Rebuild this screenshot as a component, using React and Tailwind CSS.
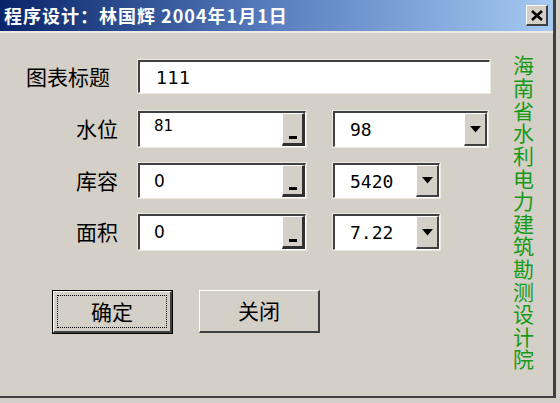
import React from 'react';

const cjk = { fontFamily: '"Noto Sans CJK SC", "DejaVu Sans", sans-serif' };
const num = { fontFamily: '"DejaVu Sans", "Liberation Sans", sans-serif' };
const mono = { fontFamily: '"DejaVu Sans Mono", "Liberation Mono", monospace' };

const sunken =
  'border-t-2 border-l-2 border-b border-r border-t-[#404040] border-l-[#404040] border-b-white border-r-white bg-white shadow-[0_0_0_1px_#ece9e2]';

function DotButton() {
  return (
    <div className="flex h-full w-[23px] items-end justify-center border-t border-l border-t-white border-l-white border-b-[3px] border-r-[3px] border-b-[#303030] border-r-[#303030] bg-[#d4d0c8] pb-[4px]">
      <div className="h-[3px] w-[8px] bg-black" />
    </div>
  );
}

function ArrowButton() {
  return (
    <div className="flex h-full w-[23px] items-center justify-center border-t border-l border-t-white border-l-white border-b-2 border-r-2 border-b-[#404040] border-r-[#404040] bg-[#d4d0c8]">
      <svg width="11" height="7" viewBox="0 0 11 7">
        <path d="M0 0H11L5.5 6.5Z" fill="#000" />
      </svg>
    </div>
  );
}

function Row({ label, value, combo, comboW, h, small }) {
  return (
    <div className="flex items-center" style={{ height: h }}>
      <div className="w-[120px] pr-[2px] text-right text-[21px] text-black" style={cjk}>
        {label}
      </div>
      <div className={`ml-[18px] flex h-full w-[168px] ${sunken}`}>
        <div
          className={`flex-1 pl-[14px] ${small ? 'pt-[2px] text-[15px]' : 'pt-[4px] text-[17px]'} text-black`}
          style={num}
        >
          {value}
        </div>
        <DotButton />
      </div>
      <div className={`ml-[27px] flex h-full ${comboW} ${sunken}`}>
        <div className="flex flex-1 items-center pl-[15px] text-[18px] text-black" style={mono}>
          {combo}
        </div>
        <ArrowButton />
      </div>
    </div>
  );
}

export default function App() {
  const side = '海南省水利电力建筑勘测设计院'.split('');
  return (
    <div className="h-[403px] w-[560px] overflow-hidden bg-[#d4d0c8]">
      <div className="flex h-[398px] w-[556px] flex-col border-r-[3px] border-b-2 border-r-[#404040] border-b-[#404040] bg-[#d4d0c8]">
        <div className="flex h-[31px] items-center bg-gradient-to-r from-[#0a246a] via-[#5a7fc0] to-[#a6caf0] pl-[4px] pr-[5px]">
          <div className="flex-1 text-[18px] font-bold tracking-[1px] text-white" style={cjk}>
            程序设计：林国辉 2004年1月1日
          </div>
          <div className="flex h-[21px] w-[22px] items-center justify-center border-t border-l border-t-white border-l-white border-b-2 border-r-2 border-b-[#404040] border-r-[#404040] bg-[#d4d0c8]">
            <svg width="12" height="11" viewBox="0 0 12 11">
              <path d="M1 1L11 10M11 1L1 10" stroke="#000" strokeWidth="2.6" />
            </svg>
          </div>
        </div>
        <div className="h-[2px] bg-[#ece9e2]" />
        <div className="flex flex-1">
          <div className="flex-1">
            <div className="mt-[27px] flex h-[33px] items-center">
              <div className="w-[138px] pl-[26px] text-[21px] text-black" style={cjk}>
                图表标题
              </div>
              <div className={`flex h-full w-[352px] items-center pl-[16px] text-[18px] text-black ${sunken}`} style={num}>
                111
              </div>
            </div>
            <div className="mt-[18px]">
              <Row label="水位" value="81" combo="98" comboW="w-[155px]" h={36} small />
            </div>
            <div className="mt-[16px]">
              <Row label="库容" value="0" combo="5420" comboW="w-[107px]" h={35} />
            </div>
            <div className="mt-[16px]">
              <Row label="面积" value="0" combo="7.22" comboW="w-[107px]" h={36} />
            </div>
            <div className="mt-[40px] flex pl-[52px]">
              <div className="h-[44px] w-[121px] border border-black">
                <div className="flex h-full w-full items-center justify-center border-t border-l border-t-white border-l-white border-b-2 border-r-2 border-b-[#404040] border-r-[#404040] p-[3px]">
                  <div className="flex h-full w-full items-center justify-center border border-dotted border-black text-[21px] text-black" style={cjk}>
                    确定
                  </div>
                </div>
              </div>
              <div className="ml-[26px] flex h-[43px] w-[121px] items-center justify-center border-t border-l border-t-white border-l-white border-b-2 border-r-2 border-b-[#404040] border-r-[#404040] text-[21px] text-black" style={cjk}>
                关闭
              </div>
            </div>
          </div>
          <div className="mr-[16px] flex w-[27px] justify-center pt-[22px]">
            <div
              className="h-[320px] text-[21px] leading-[26px] tracking-[1.6px] text-[#169a16] [writing-mode:vertical-rl] [text-orientation:upright]"
              style={cjk}
            >
              {side.map((c, i) => (
                <span key={i}>{c}</span>
              ))}
            </div>
          </div>
        </div>
      </div>
    </div>
  );
}
